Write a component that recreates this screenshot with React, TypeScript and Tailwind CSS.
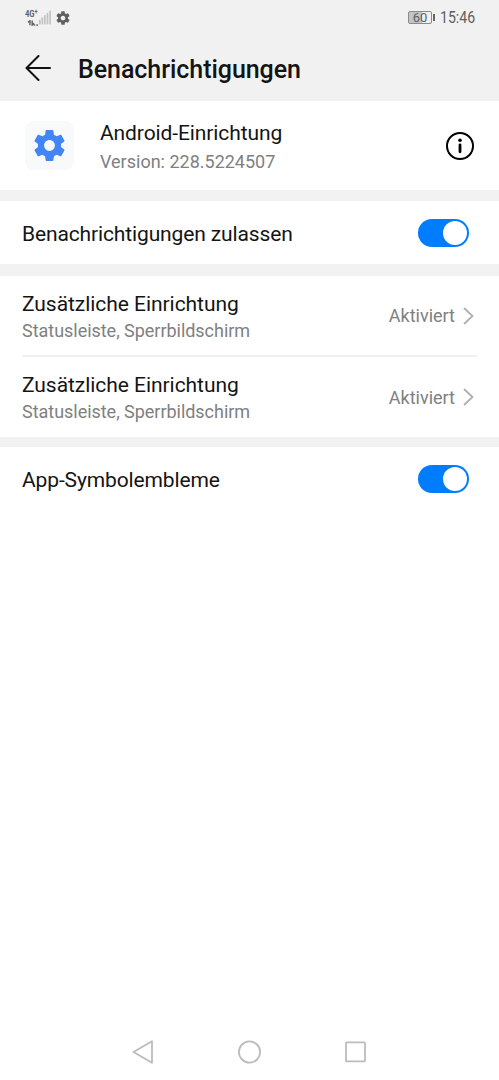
type SwitchProps = {
  label: string;
};

type ChannelProps = {
  title: string;
  description: string;
  status: string;
};

const channels: ChannelProps[] = [
  {
    title: "Zusätzliche Einrichtung",
    description: "Statusleiste, Sperrbildschirm",
    status: "Aktiviert",
  },
  {
    title: "Zusätzliche Einrichtung",
    description: "Statusleiste, Sperrbildschirm",
    status: "Aktiviert",
  },
];

const Gear = ({ className }: { className: string }) => (
  <svg viewBox="0 0 24 24" fill="currentColor" className={className}>
    <path d="M19.43 12.98c.04-.32.07-.64.07-.98s-.03-.66-.07-.98l2.11-1.65c.19-.15.24-.42.12-.64l-2-3.46c-.12-.22-.39-.3-.61-.22l-2.49 1c-.52-.4-1.08-.73-1.69-.98l-.38-2.65C14.46 2.18 14.25 2 14 2h-4c-.25 0-.46.18-.49.42l-.38 2.65c-.61.25-1.17.59-1.69.98l-2.49-1c-.23-.09-.49 0-.61.22l-2 3.46c-.13.22-.07.49.12.64l2.11 1.65c-.04.32-.07.65-.07.98s.03.66.07.98l-2.11 1.65c-.19.15-.24.42-.12.64l2 3.46c.12.22.39.3.61.22l2.49-1c.52.4 1.08.73 1.69.98l.38 2.65c.03.24.24.42.49.42h4c.25 0 .46-.18.49-.42l.38-2.65c.61-.25 1.17-.59 1.69-.98l2.49 1c.23.09.49 0 .61-.22l2-3.46c.12-.22.07-.49-.12-.64l-2.11-1.65zM12 15.5c-1.93 0-3.5-1.57-3.5-3.5s1.57-3.5 3.5-3.5 3.5 1.57 3.5 3.5-1.57 3.5-3.5 3.5z" />
  </svg>
);

const StatusBar = () => (
  <div className="flex h-[35px] items-center pr-6 pl-[25px] text-[#5f5f5f]">
    <div className="flex h-[16px] w-[14px] flex-col">
      <span className="h-[8px] origin-left scale-x-80 text-[9.5px] leading-[8px] font-bold whitespace-nowrap">
        4G<sup className="-top-[3px] text-[7px]">+</sup>
      </span>
      <svg viewBox="0 0 12 6" className="mt-[2px] ml-[2px] h-[6px] w-[12px] shrink-0" fill="none" stroke="currentColor" strokeWidth="1.4">
        <path d="M1 2.4L3 0.8V5.2M5.2 0.4V5L7.2 3.4" />
        <path d="M6.6 5h1.6M9.4 5h1.6" />
      </svg>
    </div>
    <svg viewBox="0 0 13 15" className="h-[15px] w-[12px]" fill="#c2c2c2">
      <rect x="0" y="10" width="1.8" height="5" />
      <rect x="2.7" y="7.5" width="1.8" height="7.5" />
      <rect x="5.5" y="5" width="1.8" height="10" />
      <rect x="8.3" y="2.5" width="1.8" height="12.5" />
      <rect x="11.1" y="0" width="1.8" height="15" />
    </svg>
    <Gear className="ml-[4px] size-4" />

    <div className="ml-auto flex items-center">
      <div className="flex h-[13px] w-[24px] items-center justify-center rounded-[2px] border border-[#8a8a8a] bg-linear-to-r from-[#c4c4c4] from-60% to-[#f1f1f1] to-60% text-[13px] leading-none">
        60
      </div>
      <div className="ml-[1px] h-[7px] w-[2px] bg-[#666]" />
      <span className="ml-[5px] w-[35px] origin-left scale-x-[0.88] text-[16px] leading-none">15:46</span>
    </div>
  </div>
);

const Header = () => (
  <div className="flex h-[66px] items-center pl-[25px]">
    <svg viewBox="0 0 26 26" className="size-[26px]" fill="none" stroke="#111" strokeWidth="2" strokeLinecap="round" strokeLinejoin="round">
      <path d="M25 13H1.5M13.5 1L1.5 13l12 12" />
    </svg>
    <h1 className="ml-[27px] pt-[4px] text-[25px] leading-8 font-medium tracking-[-0.05px]">Benachrichtigungen</h1>
  </div>
);

const Switch = () => (
  <button
    role="switch"
    aria-checked="true"
    className="flex h-[28px] w-[51px] items-center justify-end rounded-full bg-[#007dff] pr-[2px]"
  >
    <span className="size-[24px] rounded-full bg-white" />
  </button>
);

const SwitchRow = ({ label }: SwitchProps) => (
  <div className="flex h-[63px] items-center justify-between bg-white pr-[30px] pl-[22px]">
    <span className="pt-[2px] text-[21px] leading-6 tracking-[-0.13px]">{label}</span>
    <Switch />
  </div>
);

const ChannelRow = ({ title, description, status }: ChannelProps) => (
  <div className="flex h-[80px] items-center first:h-[81px]">
    <div className="pt-[2px]">
      <p className="text-[21px] leading-[27px] tracking-[-0.05px]">{title}</p>
      <p className="text-[18px] leading-[25px] tracking-[-0.03px] text-[#808080]">{description}</p>
    </div>
    <span className="ml-auto text-[18px] text-[#808080]">{status}</span>
    <svg viewBox="0 0 11 18" className="mr-[3px] ml-[8px] h-[18px] w-[11px]" fill="none" stroke="#b0b0b0" strokeWidth="1.8">
      <path d="M1 1l8.5 8L1 17" />
    </svg>
  </div>
);

const NavigationBar = () => (
  <div className="mt-auto flex h-[56px] items-center pl-[132px] text-[#bcbcbc]">
    <svg viewBox="0 0 22 24" className="h-[24px] w-[22px]" fill="none" stroke="currentColor" strokeWidth="1.8" strokeLinejoin="round">
      <path d="M1.5 12L20 1.2v21.6z" />
    </svg>
    <svg viewBox="0 0 24 24" className="ml-[83px] size-6" fill="none" stroke="currentColor" strokeWidth="1.8">
      <circle cx="12.5" cy="12" r="10.6" />
    </svg>
    <svg viewBox="0 0 24 24" className="ml-[82px] size-6" fill="none" stroke="currentColor" strokeWidth="1.8">
      <rect x="3" y="2.4" width="19" height="19" rx="0.6" />
    </svg>
  </div>
);

const App = () => {
  return (
    <div className="flex h-[1080px] w-[499px] flex-col bg-white font-[Roboto,sans-serif] text-[#141414]">
      <div className="bg-[#f1f1f1]">
        <StatusBar />
        <Header />
      </div>

      <div className="flex h-[89px] items-center bg-white pr-6 pl-[25px]">
        <div className="flex size-[49px] items-center justify-center rounded-[9px] bg-[#f8f9fb]">
          <Gear className="size-[37px] text-[#4285f4]" />
        </div>
        <div className="ml-[26px] pt-[3px]">
          <p className="text-[21px] leading-[29px] tracking-[-0.1px]">Android-Einrichtung</p>
          <p className="text-[18px] leading-[28px] text-[#808080]">Version: 228.5224507</p>
        </div>
        <svg viewBox="0 0 30 30" className="ml-auto size-[30px]" fill="none" stroke="#000">
          <circle cx="15" cy="15" r="13" strokeWidth="2" />
          <circle cx="15" cy="9.2" r="1.8" fill="#000" stroke="none" />
          <path d="M15 13.8v7" strokeWidth="2.8" strokeLinecap="round" />
        </svg>
      </div>

      <div className="h-[11px] bg-[#f2f2f2]" />
      <SwitchRow label="Benachrichtigungen zulassen" />
      <div className="h-[12px] bg-[#f2f2f2]" />

      <div className="divide-y-2 divide-[#f0f0f0] pr-[22px] pl-[22px]">
        {channels.map((channel, index) => (
          <ChannelRow key={index} {...channel} />
        ))}
      </div>

      <div className="h-[10px] bg-[#f2f2f2]" />
      <SwitchRow label="App-Symbolembleme" />

      <NavigationBar />
    </div>
  );
};

export default App;
